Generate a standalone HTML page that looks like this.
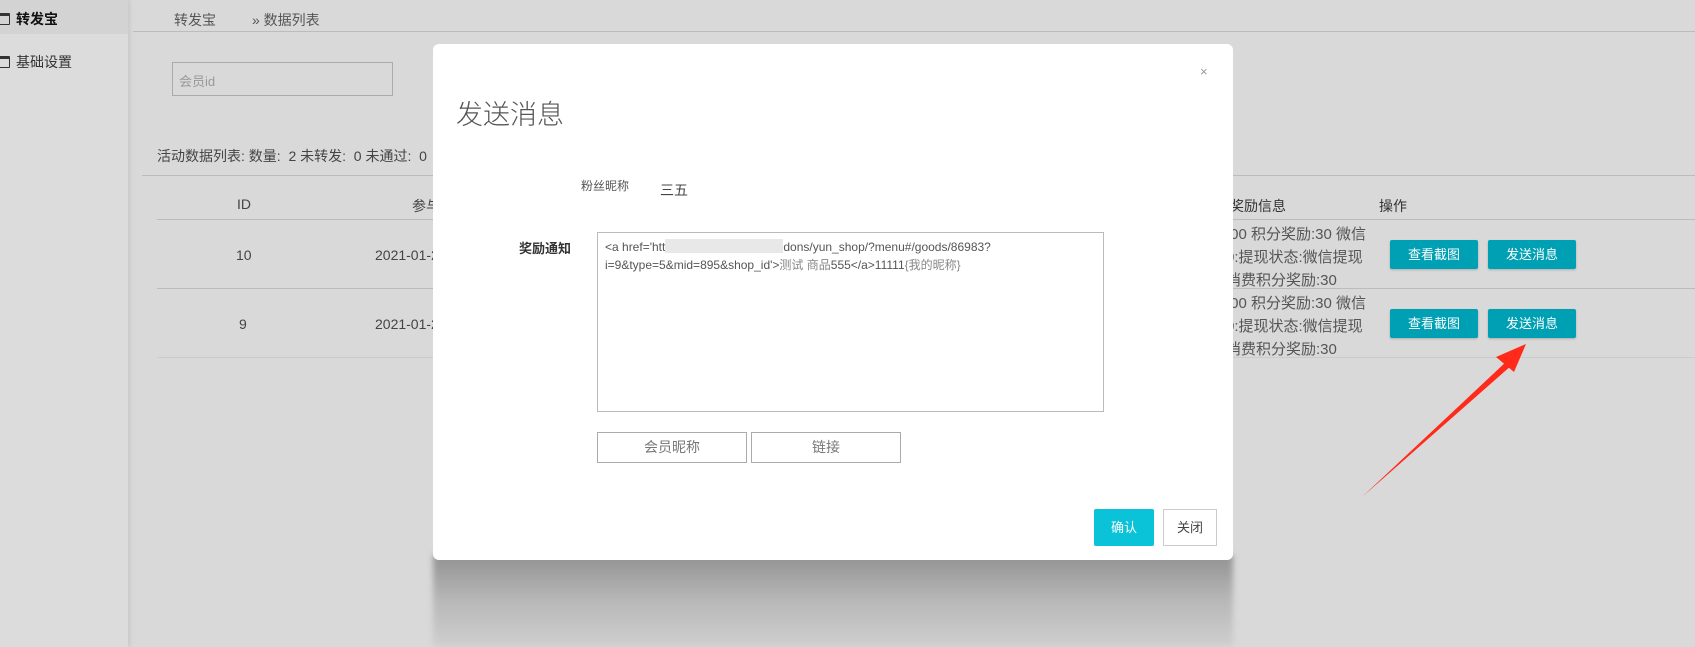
<!DOCTYPE html>
<html><head><meta charset="utf-8"><style>
*{margin:0;padding:0;box-sizing:border-box}
body{width:1695px;height:647px;overflow:hidden;background:#d9d9d9;font-family:"Liberation Sans","Noto Sans CJK SC",sans-serif;position:relative;color:#333}
.a{position:absolute;white-space:nowrap}
.sb{position:absolute;left:0;top:0;width:128px;height:647px;background:#dcdcdc;box-shadow:2px 0 4px rgba(0,0,0,.08)}
.ico{display:inline-block;width:11px;height:12px;border:1.5px solid #333;border-radius:1px;vertical-align:-1px;margin-right:6px;border-top-width:3px}
.ln{position:absolute;height:1px;background:#bcbcbc}
.btn{position:absolute;background:#00a0b4;color:#fff;font-size:13px;text-align:center;line-height:29px;border-radius:2px;box-shadow:0 1px 2px rgba(0,0,0,.2)}
.g{color:#555;font-size:15px}
.modal{position:absolute;left:433px;top:44px;width:800px;height:516px;background:#fff;border-radius:6px}
.sh{position:absolute;left:433px;top:555px;width:800px;height:92px;background:linear-gradient(#929292,#b8b8b8 50%,#cfcfcf);filter:blur(3px)}
.ob{position:absolute;border:1px solid #aaa;background:#fff;color:#777;font-size:14px;text-align:center;line-height:28px}
</style></head><body>
<div class="sb">
 <div style="position:absolute;left:0;top:0;width:128px;height:34px;background:#d3d3d3"></div>
 <div class="a" style="left:-1px;top:9px;font-size:14px;font-weight:bold;color:#111"><span class="ico"></span>转发宝</div>
 <div class="a" style="left:-1px;top:52px;font-size:14px;color:#333"><span class="ico"></span>基础设置</div>
</div>
<div class="a" style="left:174px;top:10px;font-size:14px;color:#555">转发宝</div>
<div class="a" style="left:252px;top:10px;font-size:14px;color:#555">» 数据列表</div>
<div class="ln" style="left:133px;top:31px;width:1562px"></div>
<div class="a" style="left:172px;top:62px;width:221px;height:34px;border:1px solid #aaa"></div>
<div class="a" style="left:179px;top:71px;font-size:13px;color:#999">会员id</div>
<div class="a" style="left:157px;top:146px;font-size:14px;color:#444">活动数据列表: 数量:&nbsp; 2 未转发:&nbsp; 0 未通过:&nbsp; 0</div>
<div class="ln" style="left:142px;top:175px;width:1553px"></div>
<div class="a" style="left:237px;top:196px;font-size:14px;color:#444">ID</div>
<div class="a" style="left:412px;top:196px;font-size:14px;color:#444">参与</div>
<div class="a" style="left:1230px;top:196px;font-size:14px;color:#333">奖励信息</div>
<div class="a" style="left:1379px;top:196px;font-size:14px;color:#333">操作</div>
<div class="ln" style="left:157px;top:219px;width:1538px"></div>
<div class="a" style="left:236px;top:247px;font-size:14px;color:#444">10</div>
<div class="a" style="left:375px;top:247px;font-size:14px;color:#444">2021-01-2</div>
<div class="ln" style="left:157px;top:288px;width:1538px"></div>
<div class="a" style="left:239px;top:316px;font-size:14px;color:#444">9</div>
<div class="a" style="left:375px;top:316px;font-size:14px;color:#444">2021-01-2</div>
<div class="ln" style="left:157px;top:357px;width:1538px;background:#cbcbcb"></div>
<div class="a g" style="left:1226px;top:223px;line-height:23px">.00 积分奖励:30 微信<br>0:提现状态:微信提现<br>消费积分奖励:30</div>
<div class="a g" style="left:1226px;top:292px;line-height:23px">.00 积分奖励:30 微信<br>0:提现状态:微信提现<br>消费积分奖励:30</div>
<div class="btn" style="left:1390px;top:240px;width:88px">查看截图</div>
<div class="btn" style="left:1488px;top:240px;width:88px">发送消息</div>
<div class="btn" style="left:1390px;top:309px;width:88px">查看截图</div>
<div class="btn" style="left:1488px;top:309px;width:88px">发送消息</div>
<svg class="a" style="left:0;top:0" width="1695" height="647"><polygon points="1362,497 1508,360 1512,365" fill="#ff2a1a"/><polygon points="1526,344 1496,357 1514,372" fill="#ff2a1a"/></svg>
<div class="sh"></div>
<div class="modal"></div>
<div class="a" style="left:1200px;top:64px;font-size:13px;color:#999">×</div>
<div class="a" style="left:456px;top:93px;font-size:27px;color:#555;font-weight:300">发送消息</div>
<div class="a" style="left:581px;top:177px;font-size:12px;color:#555">粉丝昵称</div>
<div class="a" style="left:660px;top:180px;font-size:14px;color:#444">三五</div>
<div class="a" style="left:519px;top:238px;font-size:13px;color:#333;font-weight:bold">奖励通知</div>
<div class="a" style="left:597px;top:232px;width:507px;height:180px;border:1px solid #bbb;background:#fff"></div>
<div class="a" style="left:605px;top:238px;font-size:12px;color:#555;line-height:18px">&lt;a href='htt<span style="display:inline-block;width:118px;height:14px;background:#e8e8e8;vertical-align:-2px"></span>dons/yun_shop/?menu#/goods/86983?<br>i=9&amp;type=5&amp;mid=895&amp;shop_id'&gt;<span style="color:#888">测试 商品</span>555&lt;/a&gt;11111<span style="color:#888">{我的昵称}</span></div>
<div class="ob" style="left:597px;top:432px;width:150px;height:31px">会员昵称</div>
<div class="ob" style="left:751px;top:432px;width:150px;height:31px">链接</div>
<div class="a" style="left:1094px;top:509px;width:60px;height:37px;background:#0bc3d8;color:#fff;font-size:13px;text-align:center;line-height:37px;border-radius:2px">确认</div>
<div class="a" style="left:1163px;top:509px;width:54px;height:37px;border:1px solid #ccc;color:#444;font-size:13px;text-align:center;line-height:35px">关闭</div>
</body></html>
